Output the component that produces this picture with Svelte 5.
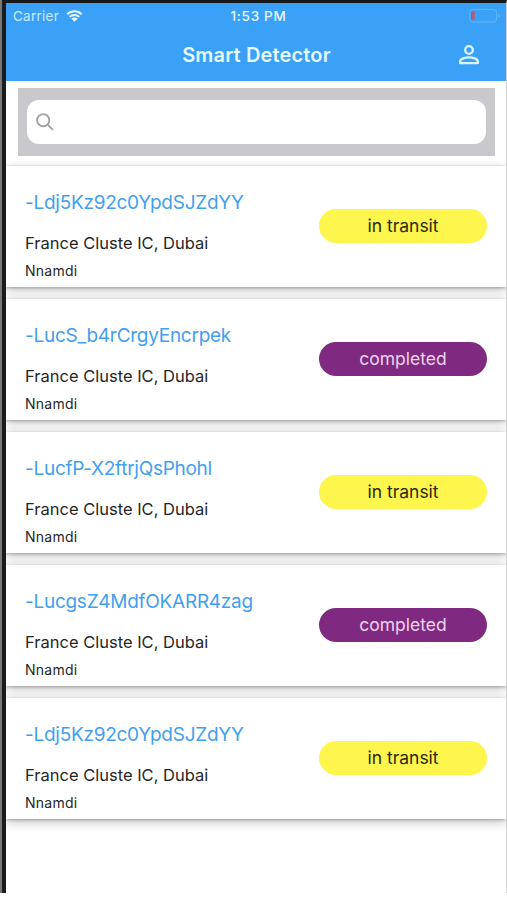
<script lang="ts">
	interface Shipment {
		id: string;
		address: string;
		owner: string;
		status: 'in transit' | 'completed';
	}

	const address = 'France Cluste IC, Dubai';
	const owner = 'Nnamdi';

	const shipments: Shipment[] = [
		{ id: '-Ldj5Kz92c0YpdSJZdYY', address, owner, status: 'in transit' },
		{ id: '-LucS_b4rCrgyEncrpek', address, owner, status: 'completed' },
		{ id: '-LucfP-X2ftrjQsPhohl', address, owner, status: 'in transit' },
		{ id: '-LucgsZ4MdfOKARR4zag', address, owner, status: 'completed' },
		{ id: '-Ldj5Kz92c0YpdSJZdYY', address, owner, status: 'in transit' },
	];

	let query = $state('');
</script>

<div class="device">
	<div class="screen">
		<header>
			<div class="status-bar">
				<div class="carrier">
					<span>Carrier</span>
					<svg class="wifi" viewBox="0 0 16 12" aria-hidden="true">
						<path d="M.8 4.3a10.3 10.3 0 0 1 14.4 0M3.2 6.9a6.8 6.8 0 0 1 9.6 0" />
						<path class="dot" d="M8 11.7 4.9 8.7a4.4 4.4 0 0 1 6.2 0z" />
					</svg>
				</div>
				<span class="time">1:53 PM</span>
				<svg class="battery" viewBox="0 0 32 14" aria-hidden="true">
					<rect class="shell" x=".6" y=".6" width="27" height="12.4" rx="3" />
					<rect class="level" x="2" y="2.3" width="3.6" height="9" rx="1" />
					<path class="cap" d="M29.2 4.8c2 .7 2 3.3 0 4z" />
				</svg>
			</div>
			<div class="nav-bar">
				<h1>Smart Detector</h1>
				<button class="profile" aria-label="Profile">
					<svg viewBox="0 0 20 20">
						<circle cx="10" cy="5" r="3.8" />
						<path d="M1.2 18.2v-1.6c0-3 5.2-4.3 8.8-4.3s8.8 1.3 8.8 4.3v1.6z" />
					</svg>
				</button>
			</div>
		</header>

		<div class="search">
			<label class="search-field">
				<svg viewBox="0 0 18 18" aria-hidden="true">
					<circle cx="7.2" cy="7.2" r="6.1" />
					<path d="m11.7 11.7 5.2 5.2" />
				</svg>
				<input type="text" aria-label="Search" bind:value={query} />
			</label>
		</div>

		<div class="cards">
			{#each shipments as s}
				<article class="card">
					<div class="details">
						<h2>{s.id}</h2>
						<p class="address">{s.address}</p>
						<p class="owner">{s.owner}</p>
					</div>
					<span class="badge" class:completed={s.status === 'completed'}>{s.status}</span>
				</article>
			{/each}
		</div>
	</div>
</div>

<style>
	:global(body) {
		background: #fff;
	}

	.device {
		box-sizing: border-box;
		width: 507px;
		height: 893px;
		padding-left: 2px;
		background: #77787a;
		overflow: hidden;
		font-family: Inter, 'Liberation Sans', sans-serif;
	}

	.screen {
		box-sizing: border-box;
		height: 893px;
		border-top: 3px solid #17191d;
		border-left: 4px solid #191b1d;
		border-right: 1px solid #d4d4d6;
		background: #fff;
	}

	header {
		height: 78px;
		background: #3aa1f7;
		color: #e6f8ff;
	}

	.status-bar {
		display: grid;
		grid-template-columns: 1fr auto 1fr;
		align-items: center;
		height: 26px;
		padding: 0 5px 0 7px;
		font-size: 13px;
	}

	.carrier {
		display: flex;
		align-items: center;
		gap: 7px;
		color: #c9eaff;
		font-size: 13.5px;
		letter-spacing: 0.25px;
	}

	.wifi {
		width: 17px;
		height: 12px;
		fill: none;
		stroke: #e6f8ff;
		stroke-width: 2;
	}

	.wifi .dot {
		fill: #e6f8ff;
		stroke: none;
	}

	.time {
		margin-left: 3px;
		font-weight: 500;
		font-size: 13.5px;
		letter-spacing: 0.7px;
	}

	.battery {
		justify-self: end;
		width: 32px;
		height: 14px;
	}

	.shell {
		fill: none;
		stroke: #64b8fa;
	}

	.level {
		fill: #c35769;
	}

	.cap {
		fill: #64b8fa;
	}

	.nav-bar {
		display: grid;
		grid-template-columns: 1fr auto 1fr;
		align-items: center;
		height: 52px;
		padding: 0 27px 0 28px;
	}

	h1 {
		grid-column: 2;
		margin: 0;
		font-size: 20px;
		font-weight: 600;
		line-height: 24px;
		letter-spacing: 0.15px;
	}

	.profile {
		justify-self: end;
		display: flex;
		padding: 0;
		border: 0;
		background: none;
	}

	.profile svg {
		width: 20px;
		height: 20px;
		fill: none;
		stroke: #d9f5ff;
		stroke-width: 2.3;
		stroke-linejoin: round;
	}

	.search {
		margin: 7px 11px 10px 12px;
		padding: 12px 9px;
		background: #c8c8cd;
	}

	.search-field {
		display: flex;
		align-items: center;
		gap: 8px;
		height: 44px;
		padding: 0 9px;
		border-radius: 12px;
		background: #fff;
	}

	.search-field svg {
		flex: none;
		width: 18px;
		height: 18px;
		fill: none;
		stroke: #a3a3a6;
		stroke-width: 1.9;
	}

	input {
		flex: 1;
		border: 0;
		outline: 0;
		background: none;
		font: inherit;
	}

	.cards {
		display: flex;
		flex-direction: column;
		gap: 12px;
	}

	.card {
		display: flex;
		justify-content: space-between;
		align-items: center;
		height: 121px;
		box-sizing: border-box;
		padding: 0 19px;
		background: #fff;
		box-shadow:
			0 1px 3px rgba(0, 0, 0, 0.26),
			0 3px 11px rgba(0, 0, 0, 0.24);
		/* keeps each shadow out of the card before it */
		clip-path: inset(-5px 0 -12px);
	}

	.details {
		padding-top: 17px;
	}

	h2 {
		margin: 0 0 18px;
		color: #429ff0;
		font-size: 19px;
		font-weight: 400;
		line-height: 24px;
		letter-spacing: -0.27px;
		font-variant-ligatures: none;
	}

	p {
		margin: 0;
		color: #262626;
	}

	.address {
		margin-bottom: 9px;
		font-size: 16.5px;
		line-height: 20px;
	}

	.owner {
		font-size: 14px;
		line-height: 18px;
		letter-spacing: 0.25px;
	}

	.badge {
		width: 168px;
		height: 34px;
		margin-bottom: 1px;
		border-radius: 17px;
		background: #fef54d;
		color: #2b2909;
		font-size: 17.5px;
		line-height: 34px;
		text-align: center;
	}

	.badge.completed {
		background: #7f2a80;
		color: #edd3ee;
	}
</style>
